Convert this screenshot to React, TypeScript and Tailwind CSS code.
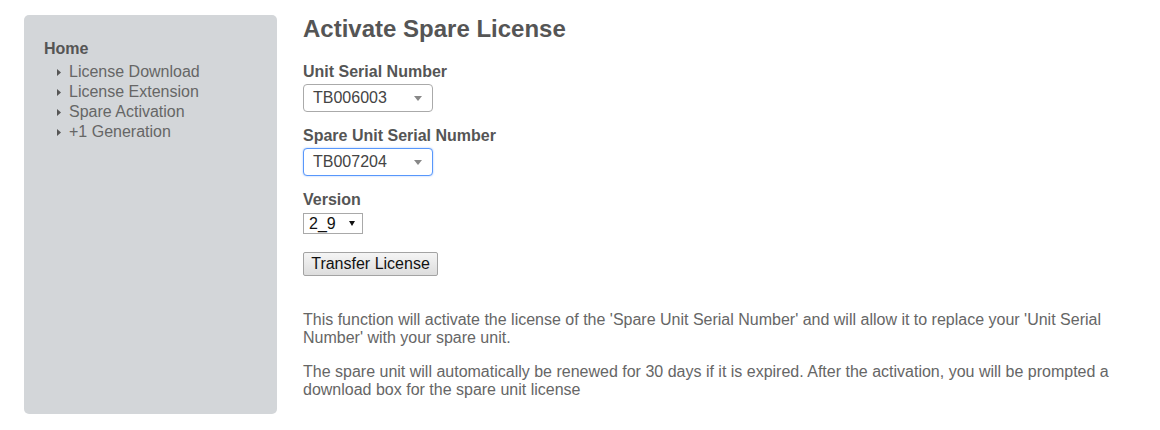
const menu = ['License Download', 'License Extension', 'Spare Activation', '+1 Generation']

function Caret() {
  return (
    <svg width="4" height="7" viewBox="0 0 4 7" className="shrink-0">
      <path d="M0 0 L4 3.5 L0 7 Z" fill="#555" />
    </svg>
  )
}

function FancySelect({ value, focused }: { value: string; focused?: boolean }) {
  return (
    <div
      className={`flex h-[28px] w-[130px] items-center justify-between rounded-[4px] border bg-white pl-[9px] pr-[10px] text-[16px] text-[#444] ${
        focused ? 'border-[#5897fb] shadow-[0_0_2px_rgba(88,151,251,0.6)]' : 'border-[#aaa]'
      }`}
    >
      <span>{value}</span>
      <span className="h-0 w-0 border-x-4 border-t-[5px] border-x-transparent border-t-[#888]" />
    </div>
  )
}

export default function App() {
  return (
    <div className="flex gap-[26px] bg-white px-[24px] pt-[15px] font-['Liberation_Sans',Arial,sans-serif]">
      <aside className="h-[399px] w-[253px] shrink-0 rounded-[5px] bg-[#d3d6d9] pl-[20px] pt-[24px]">
        <div className="text-[16px] font-bold leading-[20px] text-[#555]">Home</div>
        <ul className="mt-[3px] pl-[13px] text-[16px] leading-[20px] text-[#666]">
          {menu.map((item) => (
            <li key={item} className="flex items-center gap-[8px]">
              <Caret />
              <span>{item}</span>
            </li>
          ))}
        </ul>
      </aside>

      <main className="w-[835px] text-[#555]">
        <h1 className="text-[24px] font-bold leading-[28px]">Activate Spare License</h1>

        <div className="mt-[19px] text-[16px] font-bold leading-[20px]">Unit Serial Number</div>
        <div className="mt-[2px]">
          <FancySelect value="TB006003" />
        </div>

        <div className="mt-[14px] text-[16px] font-bold leading-[20px]">Spare Unit Serial Number</div>
        <div className="mt-[2px]">
          <FancySelect value="TB007204" focused />
        </div>

        <div className="mt-[14px] text-[16px] font-bold leading-[20px]">Version</div>
        <div className="mt-[3px] flex h-[21px] w-[60px] items-center justify-between border border-[#a9a9a9] bg-white pl-[5px] pr-[7px] text-[16px] text-[#111]">
          <span>2_9</span>
          <span className="h-0 w-0 border-x-[3px] border-t-[5px] border-x-transparent border-t-[#111]" />
        </div>

        <button className="mt-[18px] flex h-[24px] w-[135px] items-center justify-center rounded-[2px] border border-[#a3a3a3] bg-gradient-to-b from-[#f5f5f5] to-[#dddddd] text-[16px] text-[#111]">
          Transfer License
        </button>

        <div className="mt-[35px] text-[16px] leading-[18px] text-[#666]">
          <p className="mb-[16px]">
            This function will activate the license of the 'Spare Unit Serial Number' and will allow it to replace
            your 'Unit Serial Number' with your spare unit.
          </p>
          <p>
            The spare unit will automatically be renewed for 30 days if it is expired. After the activation, you will
            be prompted a download box for the spare unit license
          </p>
        </div>
      </main>
    </div>
  )
}
